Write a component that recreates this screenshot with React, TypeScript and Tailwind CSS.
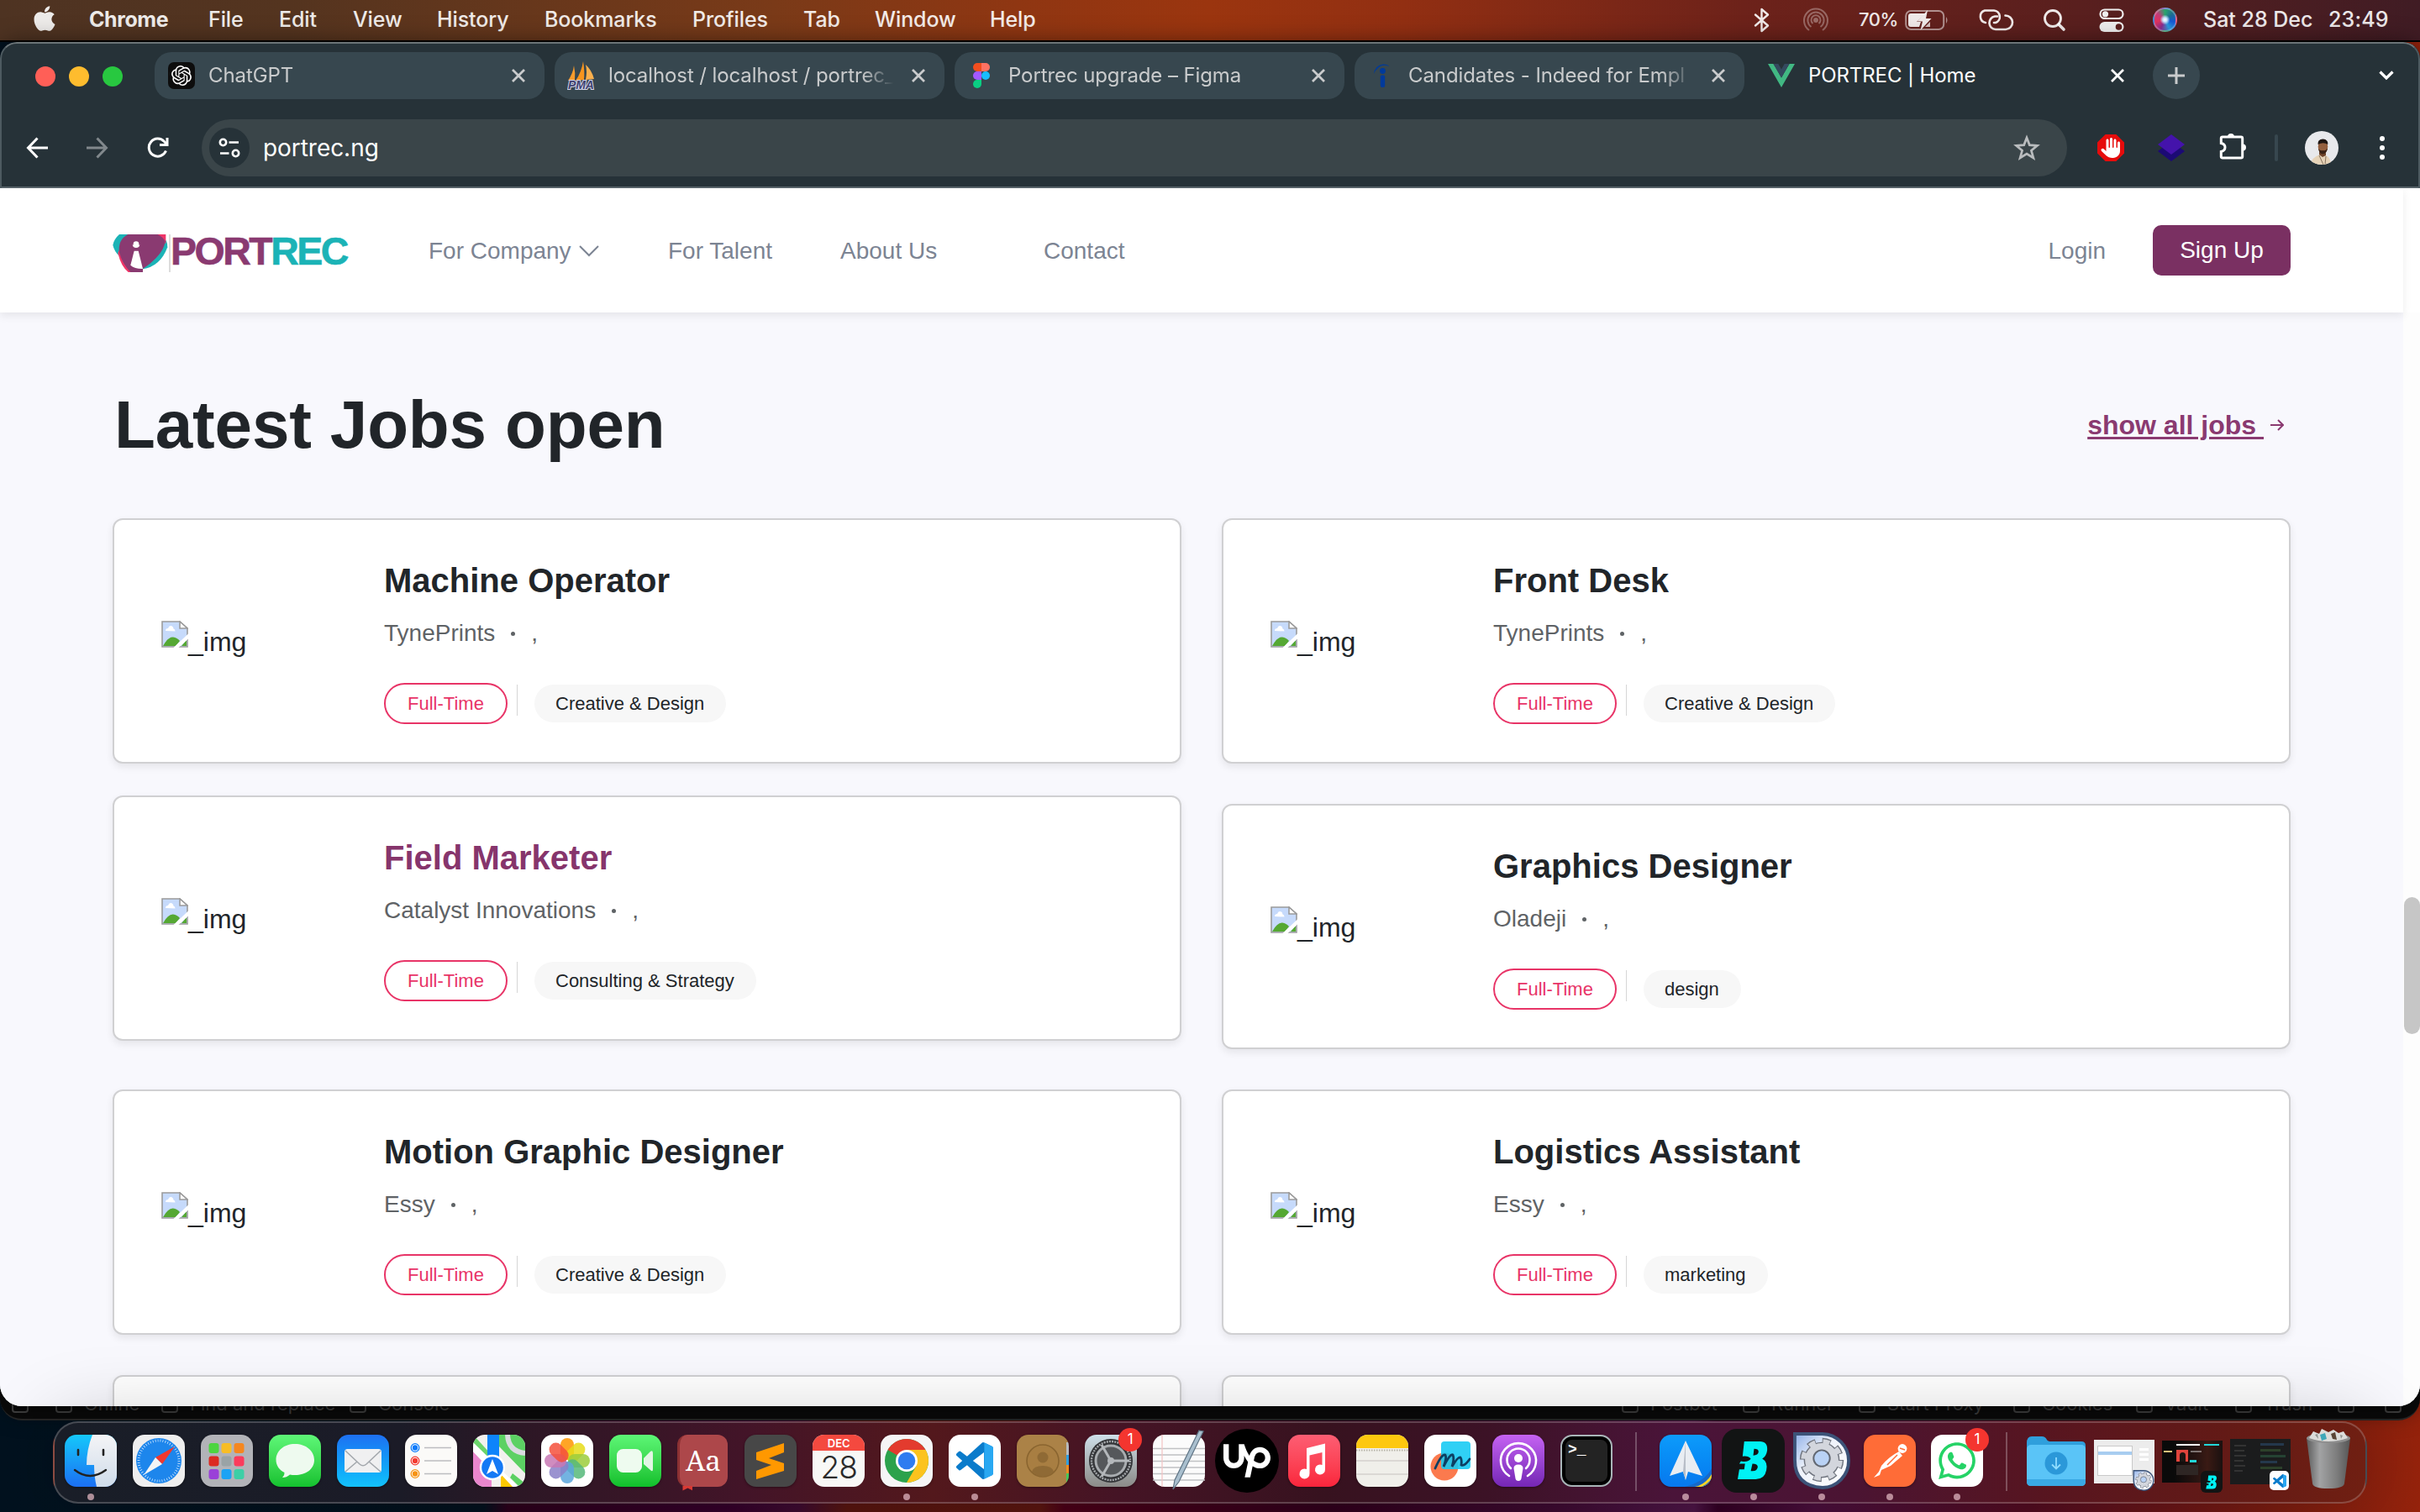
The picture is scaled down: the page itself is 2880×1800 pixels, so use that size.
import React from "react";
import { FaApple, FaWhatsapp, FaHand } from "react-icons/fa6";
import { SiOpenai, SiUpwork } from "react-icons/si";

const VSCODE =
  "M23.15 2.587L18.21.21a1.494 1.494 0 0 0-1.705.29l-9.46 8.63-4.12-3.128a.999.999 0 0 0-1.276.057L.327 7.261A1 1 0 0 0 .326 8.74L3.899 12 .326 15.26a1 1 0 0 0 .001 1.479L1.65 17.94a.999.999 0 0 0 1.276.057l4.12-3.128 9.46 8.63a1.492 1.492 0 0 0 1.704.29l4.942-2.377A1.5 1.5 0 0 0 24 20.06V3.939a1.5 1.5 0 0 0-.85-1.352zm-5.146 14.861L10.826 12l7.178-5.448v10.896z";

/* ---------- macOS menu bar ---------- */

function MenuBar() {
  return (
    <div className="flex h-[50px] shrink-0 items-center border-b-2 border-black bg-[linear-gradient(90deg,#4e3322_0%,#54341f_12%,#7a3a18_32%,#8f3612_42%,#9b350f_50%,#922f12_58%,#6d221a_72%,#591f1e_86%,#401c24_100%)] pb-px text-[25px] font-medium tracking-[-0.1px] text-white/90">
      <div className="flex w-[106px] pl-[39px]">
        <FaApple className="mb-[3px] h-[34px] w-[28px]" />
      </div>
      <div className="w-[142px] font-bold tracking-[-0.400px]">Chrome</div>
      <div className="w-[84px]">File</div>
      <div className="w-[88px]">Edit</div>
      <div className="w-[100px]">View</div>
      <div className="w-[128px]">History</div>
      <div className="w-[176px]">Bookmarks</div>
      <div className="w-[132px]">Profiles</div>
      <div className="w-[85px]">Tab</div>
      <div className="w-[137px]">Window</div>
      <div className="grow">Help</div>
      <svg className="mr-[38px] h-[30px] w-[20px]" viewBox="0 0 20 30" fill="none" stroke="currentColor" strokeWidth="2.400" strokeLinejoin="round" strokeLinecap="round">
        <path d="M2 8.500 L17 21.500 L9.500 28 V2 L17 8.500 L2 21.500" />
      </svg>
      <svg className="mr-[35px] h-[32px] w-[32px] opacity-35" viewBox="0 0 32 32" fill="none" stroke="currentColor" strokeWidth="2">
        <path d="M8 28 A14 14 0 1 1 24 28" />
        <path d="M10.500 24 A9.600 9.600 0 1 1 21.500 24" />
        <path d="M12.500 20 A5.500 5.500 0 1 1 19.500 20" />
        <circle cx="16" cy="16" r="2" fill="currentColor" />
      </svg>
      <div className="w-[55px] text-[22px] tracking-[-0.500px]">70%</div>
      <svg className="mr-[34px] h-[26px] w-[52px]" viewBox="0 0 52 26">
        <rect x="1.200" y="2" width="45" height="22" rx="6" fill="none" stroke="#fff" strokeOpacity=".5" strokeWidth="2" />
        <path d="M49 9 q3 4 0 8z" fill="#fff" fillOpacity=".5" />
        <path d="M7 5 H24 L14 15 h5 L17 21 H7 q-3 0 -3 -3 V8 q0-3 3-3z" fill="currentColor" />
        <path d="M27 1 L14.500 14.500 H21 L18.500 25 L31.500 11 H25z" fill="currentColor" />
        <path d="M30 15 V21 H24z" fill="currentColor" opacity=".8" />
      </svg>
      <svg className="mr-[34px] h-[26px] w-[44px]" viewBox="0 0 44 26" fill="none" stroke="currentColor" strokeWidth="2.600" strokeLinecap="round">
        <path d="M10 16 A7.500 7.500 0 0 1 9 1.500 H20 A7.500 7.500 0 0 1 22 16 H20" />
        <path d="M33.500 7.500 A8 8 0 0 1 34 24 H22 A7.800 7.800 0 0 1 21 8.500 H24" />
      </svg>
      <svg className="mr-[39px] h-[28px] w-[28px]" viewBox="0 0 28 28" fill="none" stroke="currentColor" strokeLinecap="round">
        <circle cx="12" cy="12" r="9.500" strokeWidth="2.800" />
        <path d="M19 19 L25 25" strokeWidth="3.600" />
      </svg>
      <svg className="mr-[34px] h-[30px] w-[30px]" viewBox="0 0 30 30">
        <rect x="1.500" y="2.500" width="27" height="10.500" rx="5.200" fill="none" stroke="#eee" strokeWidth="2.200" />
        <circle cx="7.500" cy="7.800" r="3.600" fill="#eee" />
        <rect x="0.500" y="17" width="29" height="12" rx="6" fill="#eee" />
        <circle cx="23.500" cy="23" r="3.800" fill="#5c1f1e" />
      </svg>
      <div className="mr-[31px] size-[29px] rounded-full border-2 border-white/25 bg-[radial-gradient(circle_at_50%_50%,#fff_0%,#c8e4ff_14%,transparent_34%),conic-gradient(from_0deg,#2ba36c,#1d6f8f,#1558d6,#2b9be0,#8b2c8f,#e0325e,#c23a78,#2ba36c)]" />
      <div className="w-[149px] tracking-[0px]">Sat 28 Dec</div>
      <div className="w-[109px] tracking-[0.200px]">23:49</div>
    </div>
  );
}

/* ---------- Chrome ---------- */

function CloseX({ active = false }: { active?: boolean }) {
  return (
    <svg className={active ? "size-[18px] text-white" : "size-[18px] text-[#c9cbcc]"} viewBox="0 0 18 18" stroke="currentColor" strokeWidth="2.800">
      <path d="M2 2 L16 16 M16 2 L2 16" />
    </svg>
  );
}

function Tab({ icon, title }: { icon: React.ReactNode; title: string }) {
  return (
    <div className="mr-[12px] flex h-[56px] w-[464px] items-center rounded-[20px] bg-[#37474f] pr-[22px] pl-[16px]">
      <div className="mr-[16px] flex w-[32px] justify-center">{icon}</div>
      <div className="w-[350px] whitespace-nowrap text-[#c9cbcc] [mask-image:linear-gradient(90deg,#000_86%,transparent_97%)]">{title}</div>
      <div className="grow" />
      <CloseX />
    </div>
  );
}

const ChatIcon = (
  <div className="flex size-[32px] items-center justify-center rounded-[7px] bg-[#0d0d0d]">
    <SiOpenai className="size-[24px] text-white" />
  </div>
);

const PmaIcon = (
  <svg className="h-[34px] w-[34px] shrink-0" viewBox="0 0 34 34">
    <path d="M8 5 Q10 14 9 22 L1 23 Q7 14 8 5z" fill="#f89c2c" />
    <path d="M19 0 Q21 12 20 22 L10 23 Q17 13 19 0z" fill="#f7941e" />
    <path d="M22 4 Q29 10 32 21 L22 22 Q24 12 22 4z" fill="#fbb04e" />
    <text x="1" y="33" fontFamily="Liberation Sans" fontWeight="700" fontStyle="italic" fontSize="14" fill="#3f4272" stroke="#d5d6e8" strokeWidth="2" paintOrder="stroke">PMA</text>
  </svg>
);

const FigmaIcon = (
  <svg className="h-[30px] w-[20px]" viewBox="0 0 20 30">
    <path d="M5 0 H10 V10 H5 A5 5 0 0 1 5 0z" fill="#f24e1e" />
    <path d="M10 0 H15 A5 5 0 0 1 15 10 H10z" fill="#ff7262" />
    <path d="M5 10 H10 V20 H5 A5 5 0 0 1 5 10z" fill="#a259ff" />
    <circle cx="15" cy="15" r="5" fill="#1abcfe" />
    <path d="M5 20 H10 V25 A5 5 0 1 1 5 20z" fill="#0acf83" />
  </svg>
);

const IndeedIcon = (
  <svg className="h-[28px] w-[20px]" viewBox="0 0 20 28">
    <circle cx="11.500" cy="8.500" r="3.400" fill="#003a9b" />
    <rect x="8.800" y="13.500" width="5.400" height="14.500" rx="2" fill="#003a9b" />
    <path d="M1 12 Q2 2 12 0.500 Q18 0.500 19 3 Q12 0 7 4 Q3 7 1 12z" fill="#003a9b" />
  </svg>
);

function TabStrip() {
  return (
    <div className="flex h-[78px] items-center pb-[2px] text-[24px] tracking-[-0.100px]">
      <div className="flex w-[182px] gap-[16px] pt-[2px] pl-[40px]">
        <div className="size-[24px] rounded-full bg-[#ff5f57]" />
        <div className="size-[24px] rounded-full bg-[#febc2e]" />
        <div className="size-[24px] rounded-full bg-[#28c840]" />
      </div>
      <Tab icon={ChatIcon} title="ChatGPT" />
      <Tab icon={PmaIcon} title="localhost / localhost / portrec_" />
      <Tab icon={FigmaIcon} title="Portrec upgrade – Figma" />
      <Tab icon={IndeedIcon} title="Candidates - Indeed for Empl" />
      <div className="flex w-[474px] items-center pl-[16px] text-white">
        <svg className="mr-[16px] h-[28px] w-[32px]" viewBox="0 0 32 28">
          <path d="M0 0 H6.500 L16 16.500 L25.500 0 H32 L16 28z" fill="#41b883" />
          <path d="M6.500 0 H12.300 L16 6.400 L19.700 0 H25.500 L16 16.500z" fill="#34495e" />
        </svg>
        <div className="w-[359px]">PORTREC | Home</div>
        <CloseX active />
      </div>
      <div className="flex size-[56px] items-center justify-center rounded-full bg-[#37474f]">
        <svg className="size-[20px]" viewBox="0 0 20 20" stroke="#c9cbcc" strokeWidth="3">
          <path d="M10 0 V20 M0 10 H20" />
        </svg>
      </div>
      <div className="grow" />
      <svg className="mr-[29px] h-[12px] w-[18px]" viewBox="0 0 18 12" fill="none" stroke="#fff" strokeWidth="3.200">
        <path d="M1.500 1.500 L9 9 L16.500 1.500" />
      </svg>
    </div>
  );
}

function Toolbar() {
  return (
    <div className="flex h-[94px] items-center border-b-2 border-[#566268]">
      <svg className="mr-[46px] ml-[29px] size-[26px]" viewBox="0 0 26 26" fill="none" stroke="#fff" strokeWidth="3">
        <path d="M13.500 1.500 L2.500 13 L13.500 24.500 M2.500 13 H26" />
      </svg>
      <svg className="mr-[46px] size-[26px]" viewBox="0 0 26 26" fill="none" stroke="#81888c" strokeWidth="3">
        <path d="M12.500 1.500 L23.500 13 L12.500 24.500 M23.500 13 H0" />
      </svg>
      <svg className="mr-[39px] size-[26px]" viewBox="0 0 26 26" fill="none" stroke="#fff" strokeWidth="3">
        <path d="M22.500 16.500 A10.500 10.500 0 1 1 20.500 5.500 L23.500 8.500" />
        <path d="M24 1 V9.500 H15" />
      </svg>
      <div className="flex h-[68px] w-[2220px] items-center rounded-full bg-[#3a4549] pr-[32px] pl-[9px]">
        <div className="mr-[16px] flex size-[48px] items-center justify-center rounded-full bg-[#263238]">
          <svg className="h-[24px] w-[26px]" viewBox="0 0 26 24" fill="none" stroke="#fff" strokeWidth="2.600">
            <circle cx="5.500" cy="5.500" r="3.700" />
            <path d="M12.500 5.500 H24 M2 18.500 H12.500" />
            <circle cx="20.500" cy="18.500" r="3.700" />
          </svg>
        </div>
        <div className="grow text-[28px] tracking-[-0.050px] text-white">portrec.ng</div>
        <svg className="size-[32px]" viewBox="0 0 32 32" fill="none" stroke="#b9bcbe" strokeWidth="2.700">
          <path d="M16 4 L19.300 12.600 L28.500 13.300 L21.400 19.200 L23.900 28 L16 23.200 L8.100 28 L10.600 19.200 L3.500 13.300 L12.700 12.600z" />
        </svg>
      </div>
      <div className="ml-[36px] flex size-[32px] items-center justify-center bg-[#e60c0c] [clip-path:polygon(30%_0,70%_0,100%_30%,100%_70%,70%_100%,30%_100%,0_70%,0_30%)]">
        <FaHand className="h-[24px] w-[25px] text-white" />
      </div>
      <svg className="ml-[40px] size-[32px]" viewBox="0 0 32 32">
        <path d="M0 20 L16 8 L32 20 L16 32z" fill="#1c0a75" />
        <path d="M0 12 L16 0 L32 12 L16 24z" fill="#4413ab" />
      </svg>
      <svg className="mb-[4px] ml-[40px] h-[34px] w-[34px]" viewBox="0 0 34 34">
        <path d="M11 6 a4 4 0 0 1 8 0z M29 14.500 a4 4 0 0 1 0 8z" fill="#fff" />
        <path d="M5 6 H27 Q28.700 6 28.700 7.700 V29.500 Q28.700 31 27 31 H5 Q3.300 31 3.300 29.500 V23.500 Q8 22.500 8 18.300 Q8 14.500 3.300 13.500 V7.700 Q3.300 6 5 6z" fill="none" stroke="#fff" strokeWidth="3" />
      </svg>
      <div className="ml-[33px] h-[32px] w-[4px] rounded-full bg-[#37474f]" />
      <svg className="ml-[32px] size-[40px]" viewBox="0 0 40 40">
        <defs>
          <clipPath id="face"><circle cx="20" cy="20" r="20" /></clipPath>
        </defs>
        <g clipPath="url(#face)">
          <rect width="40" height="40" fill="#e8e9ec" />
          <path d="M7 40 Q8 31 18 28 L25 29 Q31 32 31 40z" fill="#e6d3b8" />
          <path d="M17 22 H25 V29 L21 31 L17 28z" fill="#6e4329" />
          <ellipse cx="21.500" cy="18.500" rx="5.800" ry="8" fill="#94603f" />
          <path d="M15.500 16 Q15 9.500 21.500 9.500 Q28 10 27.300 16 Q22 12.500 15.500 16z" fill="#1d1512" />
          <path d="M16 21 Q17.500 27.500 21.500 27.300 Q26 27 27 20.500 Q24.500 24 21.500 23 Q18.500 24 16 21z" fill="#3a2316" />
          <path d="M17 29 L22 40 M25 30 L24 40" stroke="#705b46" strokeWidth=".8" />
        </g>
      </svg>
      <div className="ml-[49px] flex flex-col gap-[5px]">
        <div className="size-[6px] rounded-full bg-white" />
        <div className="size-[6px] rounded-full bg-white" />
        <div className="size-[6px] rounded-full bg-white" />
      </div>
    </div>
  );
}

/* ---------- Portrec page ---------- */

function Logo() {
  return (
    <div className="flex h-[45px] w-[376px] items-start">
      <svg className="h-[45px] w-[66px]" viewBox="42 57 198 135">
        <path d="M43 95 Q46 75 66 57 H215 Q240 80 238 103 Q212 172 150 181 L110 178 L67 136 Q47 116 43 95z" fill="#1bb3b6" />
        <path d="M61 124 Q72 172 98 192 H120 L66 112z M200 57 H232 V90 L205 74z" fill="#ef3568" />
        <path d="M66 122 Q60 76 97 57 H203 Q221 66 230 82 Q226 112 197 142 Q174 166 150 180 V192 H106 Q76 160 66 122z" fill="#8a3a71" />
        <path d="M150 180 Q122 181 106 167 L119 116 H134z" fill="#fff" />
        <circle cx="126" cy="92" r="10" fill="#fff" />
        <path d="M113 94 Q126 100 139 94 Q138 105 126 105 Q114 105 113 94z" fill="#fff" />
      </svg>
      <div className="ml-[1px] h-[45px] w-[2px] bg-[#dcdcdc]" />
      <div className="text-[46.500px] leading-[40px] font-bold tracking-[-2.500px] text-[#8a3a71] [-webkit-text-stroke:0.6px_currentColor]">
        PORT<span className="text-[#1bb3b6]">REC</span>
      </div>
    </div>
  );
}

function SiteHeader() {
  return (
    <div className="relative z-10 flex h-[148px] w-[2860px] items-center bg-white pl-[134px] text-[28px] text-[#7c8493] shadow-[0_4px_10px_rgba(0,0,0,0.08)]">
      <div className="pt-[6px]"><Logo /></div>
      <div className="mt-[2px] flex w-[285px] items-center">
        For Company
        <svg className="ml-[9px] h-[14px] w-[24px]" viewBox="0 0 24 14" fill="none" stroke="currentColor" strokeWidth="2">
          <path d="M1 1 L12 12 L23 1" />
        </svg>
      </div>
      <div className="mt-[2px] w-[205px]">For Talent</div>
      <div className="mt-[2px] w-[242px]">About Us</div>
      <div className="mt-[2px] grow">Contact</div>
      <div className="mt-[2px] mr-[56px]">Login</div>
      <div className="mr-[134px] flex h-[60px] w-[164px] items-center justify-center rounded-[10px] bg-[#7a3062] text-white">Sign Up</div>
    </div>
  );
}

function BrokenImage() {
  return (
    <svg className="mb-[19px] size-[32px]" viewBox="0 0 32 32">
      <path d="M1 1 H22 L31 9 V31 H1z" fill="#c6dafb" stroke="#9b9b9b" strokeWidth="1.600" />
      <path d="M22 1 V9 H31z" fill="#fff" stroke="#9b9b9b" strokeWidth="1.600" />
      <path d="M5 12 q0-3 3-3 q1-3 3-3 q3 0 3.500 3.500 q2 .5 2 3z" fill="#fff" />
      <path d="M2 30 Q8 19 14 19.500 Q19 20 22 24 L17 30z M24 30 L30 23 V30z" fill="#55a833" />
      <path d="M14.500 32 L32 15.500 V21.500 L20.500 32z" fill="#fff" />
    </svg>
  );
}

type Job = { title: string; company: string; tag: string; hovered?: boolean };

const JOBS: Job[] = [
  { title: "Machine Operator", company: "TynePrints", tag: "Creative & Design" },
  { title: "Front Desk", company: "TynePrints", tag: "Creative & Design" },
  { title: "Field Marketer", company: "Catalyst Innovations", tag: "Consulting & Strategy", hovered: true },
  { title: "Graphics Designer", company: "Oladeji", tag: "design" },
  { title: "Motion Graphic Designer", company: "Essy", tag: "Creative & Design" },
  { title: "Logistics Assistant", company: "Essy", tag: "marketing" },
];

const CARD =
  "flex h-[292px] rounded-[12px] border-2 border-[#d0d0d2] bg-white pl-[56px] shadow-[0_4px_10px_rgba(0,0,0,0.08)]";

function JobCard({ job }: { job: Job }) {
  return (
    <div className={job.hovered ? CARD + " -translate-y-[10px]" : CARD}>
      <div className="flex h-full w-[265px] items-center pt-[2px]">
        <BrokenImage />
        <span className="text-[32px] leading-[40px] text-[#212529]">_img</span>
      </div>
      <div className="flex flex-col pt-[48px]">
        <div className={job.hovered ? "text-[40px] leading-[48px] font-bold text-[#86356c]" : "text-[40px] leading-[48px] font-bold text-[#212529]"}>
          {job.title}
        </div>
        <div className="mt-[19px] flex items-center text-[28px] leading-[40px] text-[#5f6366]">
          {job.company}
          <span className="mr-[19px] ml-[19px] size-[5px] rounded-full bg-[#5f6366]" />,
        </div>
        <div className="mt-[39px] flex items-start text-[22px]">
          <div className="flex h-[49px] w-[147px] items-center justify-center rounded-full border-2 border-[#e83467] text-[#e83467]">Full-Time</div>
          <div className="mt-[2px] ml-[11px] h-[37px] w-[1px] bg-[#d6d6d6]" />
          <div className="mt-[2px] ml-[20px] flex h-[45px] items-center rounded-full bg-[#f7f7f7] pr-[26px] pl-[25px] text-[#212529]">{job.tag}</div>
        </div>
      </div>
    </div>
  );
}

function Page() {
  return (
    <div className="flex grow flex-col overflow-hidden bg-white font-['Liberation_Sans',Arial,sans-serif]">
      <SiteHeader />
      <div className="flex h-[1302px]">
        <div className="w-[2860px] overflow-hidden bg-[#f8f8fd] pr-[134px] pl-[134px]">
          <div className="flex items-center justify-between pt-[86px]">
            <div className="pl-[2px] text-[80px] leading-[96px] font-bold tracking-[-0.150px] text-[#212529]">Latest Jobs open</div>
            <div className="flex items-center pr-[8px] text-[32px] font-bold text-[#8a3a71]">
              <span className="whitespace-pre underline decoration-[3px] underline-offset-[3px]">show all jobs </span>
              <svg className="ml-[8px] size-[16px]" viewBox="0 0 16 16" fill="none" stroke="currentColor" strokeWidth="2">
                <path d="M0 8 H15 M9 2 L15 8 L9 14" />
              </svg>
            </div>
          </div>
          <div className="mt-[63px] grid grid-cols-2 gap-12">
            {JOBS.map((job) => (
              <JobCard key={job.title} job={job} />
            ))}
            <div className={CARD} />
            <div className={CARD} />
          </div>
        </div>
        <div className="w-[20px] bg-[#fdfdfd] pt-[696px] pl-[1px]">
          <div className="h-[163px] w-[19px] rounded-full bg-[#c6c6c6]" />
        </div>
      </div>
    </div>
  );
}

function BrowserWindow() {
  return (
    <div className="relative z-10 flex h-[1624px] shrink-0 flex-col overflow-hidden rounded-t-[20px] rounded-b-[26px] bg-[#263238] font-[Inter,sans-serif] shadow-[0_4px_30px_rgba(0,0,0,0.6)]">
      <div className="flex h-[174px] shrink-0 flex-col rounded-t-[20px] border-x-2 border-t-2 border-[#6b7477] border-x-[#4d5a60]">
        <TabStrip />
        <Toolbar />
      </div>
      <Page />
    </div>
  );
}

/* ---------- Window peeking out under the browser ---------- */

function Glyph() {
  return <div className="mr-[14px] size-[20px] rounded-[4px] border-2 border-[#4a4a4a]" />;
}

function StatusBar() {
  return (
    <div className="-mt-[26px] flex h-[43px] shrink-0 items-center rounded-b-[26px] border-b-2 border-[#2b2b2b] bg-[#0c0c0c] pt-[6px] text-[22px] text-[#4a4a4a]">
      <div className="flex w-[66px] items-center pl-[14px]"><Glyph /></div>
      <div className="flex w-[126px] items-center"><Glyph />Online</div>
      <div className="flex w-[224px] items-center"><Glyph />Find and replace</div>
      <div className="flex grow items-center"><Glyph />Console</div>
      <div className="flex w-[144px] items-center"><Glyph />Postbot</div>
      <div className="flex w-[138px] items-center"><Glyph />Runner</div>
      <div className="flex w-[184px] items-center"><Glyph />Start Proxy</div>
      <div className="flex w-[146px] items-center"><Glyph />Cookies</div>
      <div className="flex w-[118px] items-center"><Glyph />Vault</div>
      <div className="flex w-[122px] items-center"><Glyph />Trash</div>
      <div className="flex w-[56px] items-center"><Glyph /></div>
      <div className="flex w-[42px] items-center"><Glyph /></div>
    </div>
  );
}

/* ---------- Dock ---------- */

function Cell({ children, dot = false, badge = false }: { children: React.ReactNode; dot?: boolean; badge?: boolean }) {
  return (
    <div className="relative flex h-full w-[80.900px] shrink-0 items-center justify-center pb-[5px]">
      {children}
      {badge && (
        <div className="absolute top-[6px] right-[3px] flex size-[28px] items-center justify-center rounded-full bg-[#f4352f] text-[17px] text-white">1</div>
      )}
      {dot && <div className="absolute bottom-[2px] size-[8px] rounded-full bg-[#dfb4bf]/75" />}
    </div>
  );
}

function Tile({ children, className = "" }: { children?: React.ReactNode; className?: string }) {
  return (
    <svg className={"h-[62px] w-[62px] rounded-[14px] shadow-[0_1px_3px_rgba(0,0,0,0.4)] " + className} viewBox="0 0 62 62">
      {children}
    </svg>
  );
}

const PETALS = ["#ff9500", "#e6dc1a", "#9ccc3c", "#56b97a", "#5aa6dc", "#8a80c8", "#c878b4", "#f4503c"];
const PADS = ["#4cd540", "#f8bd26", "#f5871f", "#dc2a22", "#9aa3a6", "#fb3b5c", "#9a41d8", "#1ca3f4", "#3ccfa6"];

function VsCode({ className }: { className: string }) {
  return (
    <svg className={className} viewBox="0 0 24 24">
      <path d={VSCODE} fill="#0a7bcb" />
      <path d="M18.200 0.200 L23.200 2.600 Q24 3 24 4 V20 Q24 21 23.200 21.400 L18.200 23.800z" fill="#29a8f2" />
    </svg>
  );
}

function BMark({ className }: { className: string }) {
  return (
    <svg className={className} viewBox="0 0 40 48">
      <path d="M9 1 H28 Q38 1 37 12 Q36 19 31 22 Q38 26 36 36 Q34 47 23 47 H1 L3 35 H9 L10 28 H3 L5 25 Q14 27 17 22 Q14 18 7 19z M21 10 L20 18 Q26 18 26.500 13.500 Q26.500 10 21 10z M19 28 L17 37 Q25 38 25.500 32 Q25.500 28 19 28z" fill="#00f2f5" fillRule="evenodd" />
    </svg>
  );
}

function Gear({ className }: { className: string }) {
  return (
    <svg className={className} viewBox="0 0 70 70">
      <defs>
        <linearGradient id="gearbg" x1="0" y1="0" x2="1" y2="1">
          <stop offset="0" stopColor="#8fb0e8" /><stop offset=".4" stopColor="#eef2fa" /><stop offset="1" stopColor="#fff" />
        </linearGradient>
      </defs>
      <path d="M2 2 H36 A33 33 0 0 1 68 35 A33 33 0 0 1 36 68 Q2 66 2 34z" fill="url(#gearbg)" stroke="#3c5378" strokeWidth="4" />
      <circle cx="35" cy="34" r="22" fill="none" stroke="#70757f" strokeWidth="10" strokeDasharray="9.500 7.780" />
      <circle cx="35" cy="34" r="18" fill="none" stroke="#70757f" strokeWidth="8" />
      <circle cx="35" cy="34" r="21" fill="none" stroke="#d3d6dd" strokeWidth="9" strokeDasharray="7.500 8.990" strokeDashoffset="-.9" />
      <circle cx="35" cy="34" r="15" fill="none" stroke="#d3d6dd" strokeWidth="11" />
      <circle cx="35" cy="32" r="10" fill="#b9d2f5" stroke="#626872" strokeWidth="2" />
    </svg>
  );
}

function Separator() {
  return (
    <div className="flex h-full w-[37px] shrink-0 items-center justify-center pb-[3px]">
      <div className="h-[70px] w-[2px] bg-white/25" />
    </div>
  );
}

function Dock() {
  return (
    <div className="relative z-20 mx-[63px] mt-[1px] flex h-[98px] shrink-0 rounded-[30px] border-2 border-white/20 bg-[linear-gradient(90deg,#191e28_0%,#1b1b27_15%,#2c1725_20%,#431428_30%,#53181c_38%,#451425_46%,#37121f_55%,#3c1226_62%,#4a1439_70%,#4b1432_78%,#571520_86%,#631a16_94%,#701f12_100%)] pl-[3px] font-[Inter,sans-serif] shadow-[0_0_90px_rgba(0,0,0,0.22)]">
      <Cell dot>
        <Tile>
          <defs>
            <linearGradient id="fl" x1="0" y1="0" x2="0" y2="1"><stop offset="0" stopColor="#15c8fb" /><stop offset="1" stopColor="#1b6ff2" /></linearGradient>
            <linearGradient id="fr" x1="0" y1="0" x2="0" y2="1"><stop offset="0" stopColor="#f4f4f6" /><stop offset="1" stopColor="#cfdcea" /></linearGradient>
          </defs>
          <rect width="62" height="62" fill="url(#fl)" />
          <path d="M33 0 Q26 18 26 36 H35 Q35 50 38 62 H62 V0z" fill="url(#fr)" />
          <path d="M16 18 V24 M46 18 V24" stroke="#222" strokeWidth="2.600" strokeLinecap="round" />
          <path d="M12 42 Q30 56 49 42" fill="none" stroke="#222" strokeWidth="2.400" strokeLinecap="round" />
        </Tile>
      </Cell>
      <Cell>
        <Tile className="bg-[#eeeeee]">
          <circle cx="31" cy="31" r="27" fill="#1d86ec" />
          <circle cx="31" cy="31" r="24" fill="none" stroke="#cfe6ff" strokeWidth="3" strokeDasharray=".8 2.200" />
          <path d="M50 14 L27 27 L35 35z" fill="#f0372f" />
          <path d="M13 48 L27 27 L35 35z" fill="#f5f5f5" />
        </Tile>
      </Cell>
      <Cell>
        <Tile className="bg-[#b2b3b8]">
          {PADS.map((c, i) => (
            <rect key={c} x={9.500 + (i % 3) * 15} y={10 + Math.floor(i / 3) * 15.500} width="12" height="12" rx="3" fill={c} />
          ))}
        </Tile>
      </Cell>
      <Cell>
        <Tile className="bg-gradient-to-b from-[#5df777] to-[#12c22e]">
          <path d="M31 11 C44 11 54 19 54 30 C54 41 44 48 31 48 Q28 48 25 47.500 Q21 51 16 51 Q19 48 18.500 45 C12 42 8.500 36 8.500 30 C8.500 19 18 11 31 11z" fill="#eefaef" />
        </Tile>
      </Cell>
      <Cell>
        <Tile className="bg-gradient-to-b from-[#1e70f2] to-[#14c2fb]">
          <rect x="9" y="17" width="44" height="28" rx="3.500" fill="#f0f0f1" />
          <path d="M10 19 L27 35 Q31 38.500 35 35 L52 19 M10 44 L24 32 M52 44 L38 32" fill="none" stroke="#a4a8ad" strokeWidth="1.600" />
        </Tile>
      </Cell>
      <Cell>
        <Tile className="bg-[#fbfaf8]">
          {["#0a7bfb", "#f33b30", "#f69313"].map((c, i) => (
            <g key={c}>
              <circle cx="12" cy={15.500 + i * 15.500} r="4.800" fill="#fff" stroke={c} strokeWidth="1.300" />
              <circle cx="12" cy={15.500 + i * 15.500} r="3.200" fill={c} />
              <path d={`M23 ${15.500 + i * 15.500} H55`} stroke="#bcbdc0" strokeWidth="1.300" />
            </g>
          ))}
        </Tile>
      </Cell>
      <Cell>
        <Tile className="bg-[#f2f1ee]">
          <path d="M31 0 H62 V46 L31 14z" fill="#5cd163" />
          <path d="M0 20 L22 44 V62 H0z" fill="#ea86cd" />
          <path d="M0 0 L22 24 V34 L0 12z" fill="#6bd56b" />
          <path d="M0 9 L54 62 H42 L0 20z" fill="#fff" />
          <path d="M33 62 V47 L47 62z" fill="#fdc800" />
          <path d="M17 0 H31 V32 H17z" fill="#0d84fb" />
          <path d="M41 0 Q42 20 62 22" fill="none" stroke="#dadbe0" strokeWidth="6" />
          <path d="M47 46 L62 58 V62 H55 L44 51z" fill="#5cd163" />
          <circle cx="23" cy="39" r="14" fill="#1479f5" stroke="#fff" strokeWidth="2.400" />
          <path d="M23 29 L30 47 L23 43 L16 47z" fill="#fff" />
        </Tile>
      </Cell>
      <Cell>
        <Tile className="bg-white">
          {PETALS.map((c, i) => (
            <rect key={c} x="23" y="4" width="16" height="26" rx="8" fill={c} opacity=".85" transform={`rotate(${i * 45} 31 31)`} />
          ))}
        </Tile>
      </Cell>
      <Cell>
        <Tile className="bg-gradient-to-b from-[#5cf675] to-[#0dc02a]">
          <rect x="9" y="17" width="30" height="28" rx="7.500" fill="#eefbef" />
          <path d="M41 28 L49 20 Q52 18 52 22 V41 Q52 45 49 42 L41 35z" fill="#e2f6e4" />
        </Tile>
      </Cell>
      <Cell>
        <div className="relative flex h-[62px] w-[60px] items-center justify-center rounded-[12px] border-l-3 border-[#8c3133] bg-[#ad474a] pr-[2px] font-['Noto_Serif','Liberation_Serif',serif] text-[33px] text-white">
          Aa
          <div className="absolute top-[61px] left-[3px] h-[6px] w-[12px] bg-[#d93a34] [clip-path:polygon(0_0,100%_0,100%_100%,50%_50%,0_100%)]" />
        </div>
      </Cell>
      <Cell>
        <Tile className="bg-[#474747]">
          <path d="M47 10 V21 L29 28 L47 34 V43 L14 53 V43 L32 36 L14 30 V21z" fill="#ff9800" />
        </Tile>
      </Cell>
      <Cell>
        <div className="flex h-[62px] w-[62px] flex-col overflow-hidden rounded-[14px] bg-[#f8f8f6] text-center text-[#2b2b2b]">
          <div className="h-[19px] bg-[#f4493f] text-[13px] leading-[20px] font-semibold text-white">DEC</div>
          <div className="text-[37px] leading-[40px] font-light tracking-[-1px]">28</div>
        </div>
      </Cell>
      <Cell dot>
        <Tile className="bg-[#f5f5f6]">
          <circle cx="31" cy="31" r="26" fill="#2ba24c" />
          <path d="M31 31 L8.500 18 A26 26 0 0 1 53.500 18z" fill="#e33b2e" />
          <path d="M31 18 H53.500 A26 26 0 0 1 31 57 L42.300 37.500z" fill="#fcc31e" />
          <circle cx="31" cy="31" r="13" fill="#fff" />
          <circle cx="31" cy="31" r="10.300" fill="#2f7cf0" />
        </Tile>
      </Cell>
      <Cell dot>
        <div className="flex size-[62px] items-center justify-center rounded-[14px] bg-white">
          <VsCode className="size-[44px]" />
        </div>
      </Cell>
      <Cell>
        <Tile className="bg-[#ab8247]">
          <rect x="59" y="9" width="3" height="16" fill="#b8bcc0" />
          <rect x="59" y="24" width="3" height="12" fill="#2f9fe0" />
          <rect x="59" y="36" width="3" height="10" fill="#f08c1e" />
          <rect x="59" y="46" width="3" height="16" fill="#45c85a" />
          <circle cx="31" cy="31" r="19" fill="#a87e42" stroke="#8a6530" strokeWidth="1.600" />
          <circle cx="31" cy="27" r="6.500" fill="#8f6a35" />
          <path d="M18 44 Q20 37 31 37 Q42 37 44 44 Q31 55 18 44z" fill="#8f6a35" />
        </Tile>
      </Cell>
      <Cell badge>
        <Tile className="bg-gradient-to-b from-[#cfe0ea] to-[#8b8b88]">
          <circle cx="31" cy="31" r="26" fill="#333538" />
          <circle cx="31" cy="31" r="23" fill="none" stroke="#a4a8ab" strokeWidth="2.400" strokeDasharray="2 1.200" />
          <circle cx="31" cy="31" r="18" fill="#55585b" stroke="#a9adb0" strokeWidth="3" />
          <path d="M31 31 H53 M31 31 L20 12 M31 31 L20 50" stroke="#b4b8bb" strokeWidth="3" />
          <circle cx="31" cy="31" r="4" fill="#b4b8bb" />
        </Tile>
      </Cell>
      <Cell>
        <svg className="h-[74px] w-[66px]" viewBox="0 0 66 74">
          <rect x="2" y="6" width="62" height="62" rx="14" fill="#fbfbfb" />
          <path d="M2 22.500 H64 M2 30 H64 M2 37.500 H64 M2 45 H64 M2 52.500 H64 M2 60 H64" stroke="#c0c1c4" strokeWidth="1.400" />
          <path d="M13 6 V68" stroke="#f3c3c3" strokeWidth="1.200" />
          <path d="M57 1 L62 2 L33 62 L26 71 L28 60z" fill="#a9bfce" stroke="#5f7485" strokeWidth="1.200" />
        </svg>
      </Cell>
      <Cell>
        <div className="flex size-[76px] shrink-0 items-center justify-center rounded-full bg-black">
          <SiUpwork className="size-[56px] text-white" />
        </div>
      </Cell>
      <Cell>
        <Tile className="bg-gradient-to-b from-[#fd5d73] to-[#fa233b]">
          <path d="M22 16 L44 10.500 V41 A6 6 0 1 1 40.500 36 V21 L25.500 24.500 V46 A6 6 0 1 1 22 41z" fill="#fff" />
        </Tile>
      </Cell>
      <Cell>
        <Tile className="bg-[#f0efea]">
          <rect width="62" height="16" fill="#fdc80f" />
          <path d="M0 18.500 H62" stroke="#b5b2a8" strokeWidth="2" strokeDasharray="1.500 1.500" />
          <path d="M0 31 H62 M0 47 H62" stroke="#d3d1cd" strokeWidth="1.600" />
        </Tile>
      </Cell>
      <Cell>
        <Tile className="bg-white">
          <circle cx="24" cy="38" r="16.500" fill="#fb7a4e" />
          <rect x="20" y="8" width="35" height="33" rx="4" fill="#13c9f4" opacity=".88" />
          <path d="M13 40 Q21 22 25 24 Q27 27 23 38 Q31 22 34 24 Q36 28 33 38 Q40 26 43 27 Q45 30 44 36 Q48 38 54 29" fill="none" stroke="#0d3f63" strokeWidth="2.800" strokeLinecap="round" />
        </Tile>
      </Cell>
      <Cell>
        <Tile className="bg-gradient-to-b from-[#c562f2] to-[#7526b5]">
          <g fill="none" stroke="#fff" strokeWidth="2.600" strokeLinecap="round">
            <path d="M20 49 A21 21 0 1 1 42 49" />
            <path d="M22 40 A13.500 13.500 0 1 1 40 40" />
          </g>
          <circle cx="31" cy="28" r="5" fill="#fff" />
          <path d="M25.500 40 Q25.500 35.500 31 35.500 Q36.500 35.500 36.500 40 L34.500 52 Q34 55 31 55 Q28 55 27.500 52z" fill="#fff" />
        </Tile>
      </Cell>
      <Cell>
        <div className="flex size-[62px] items-start rounded-[14px] border-2 border-[#a9b5b8] bg-[#232323] pt-[6px] pl-[7px] font-['Liberation_Mono',monospace] text-[18px] leading-[20px] font-bold text-white ring-4 ring-black ring-inset">&gt;_</div>
      </Cell>
      <Separator />
      <Cell dot>
        <Tile className="bg-gradient-to-b from-[#0d9bfb] to-[#0878ee]">
          <path d="M34 62 Q54 58 62 42 V62z" fill="#fdd423" />
          <path d="M30 62 Q54 56 62 40 V47 Q54 60 42 62z M50 62 Q58 58 62 52 V56 L57 62z" fill="#1769c9" />
          <path d="M31 7 L51 49 L34 44 L31 54 L28 44 L12 49z" fill="#e9edf2" />
          <path d="M31 7 V54 L28 44z" fill="#b8bec8" />
        </Tile>
      </Cell>
      <Cell dot>
        <div className="flex h-[76px] w-[75px] shrink-0 items-center justify-center rounded-[18px] bg-[#121414]">
          <BMark className="h-[47px] w-[39px]" />
        </div>
      </Cell>
      <Cell dot><Gear className="h-[68px] w-[70px] shrink-0" /></Cell>
      <Cell dot>
        <Tile className="bg-[#ff6c37]">
          <circle cx="46" cy="16.500" r="5.400" fill="#fff" />
          <path d="M42 20 L46 25 Q40 30 32 37 L21 42 L19 48 L12 51 L18 44 L21 37 Q30 26 42 20z" fill="#fff" />
          <path d="M40 24 L28 36 M43 16 L49 18" stroke="#ff6c37" strokeWidth="1.500" />
        </Tile>
      </Cell>
      <Cell dot badge>
        <div className="flex size-[62px] items-center justify-center rounded-[14px] bg-white">
          <FaWhatsapp className="size-[50px] text-[#25d366]" />
        </div>
      </Cell>
      <Separator />
      <Cell>
        <svg className="h-[62px] w-[70px]" viewBox="0 0 70 62">
          <path d="M0 10 Q0 2 6 2 H18 Q22 2 24 6 Q25 8 29 8 H65 Q70 8 70 13 V30 H0z" fill="#2f9fdc" />
          <rect y="12" width="70" height="49" rx="5" fill="#5ac4f7" />
          <path d="M0 53 H70 V56 Q70 61 65 61 H5 Q0 61 0 56z" fill="#3aa9e4" />
          <circle cx="35" cy="34" r="13.500" fill="#2b98d9" />
          <path d="M35 27 V40 M30 35.500 L35 40.500 L40 35.500" fill="none" stroke="#8fdcff" strokeWidth="1.800" />
        </svg>
      </Cell>
      <Cell>
        <div className="relative mt-[3px] h-[52px] w-[72px] shrink-0 bg-[#ececec] pt-[7px] pl-[4px]">
          <div className="h-[36px] w-[42px] border border-[#c9c9c9] bg-white pt-[6px]">
            <div className="h-[4px] bg-[#a8cdf0]" />
          </div>
          <div className="absolute top-[36px] right-0"><Gear className="h-[25px] w-[26px]" /></div>
          <div className="absolute top-[10px] right-[7px] flex flex-col gap-[3px]">
            <div className="h-[3px] w-[11px] bg-white" /><div className="h-[3px] w-[11px] bg-white" /><div className="h-[3px] w-[11px] bg-white" />
          </div>
        </div>
      </Cell>
      <Cell>
        <div className="relative mt-[3px] h-[50px] w-[72px] shrink-0 bg-[linear-gradient(90deg,#0a0a0a_20%,#2a1512_60%,#3a1a14_75%,#1a1110_100%)]">
          <div className="absolute top-[4px] left-[17px] h-[2px] w-[28px] bg-white" />
          <div className="absolute top-[4px] left-[50px] h-[2px] w-[18px] bg-[#22d6d8]" />
          <div className="absolute top-[12px] left-[2px] h-[2px] w-[10px] bg-[#e6c27a]" />
          <div className="absolute top-[11px] left-[17px] h-[14px] w-[14px] bg-[#e0443c]">
            <div className="mx-auto mt-[3px] h-[11px] w-[7px] rounded-t-full bg-[#1b1512]" />
          </div>
          <div className="absolute top-[12px] left-[34px] h-[2px] w-[13px] bg-white/40" />
          <div className="absolute top-[23px] left-[33px] h-[3px] w-[8px] bg-[#22d6d8]" />
          <div className="absolute top-[29px] left-[17px] h-[12px] w-[26px] bg-[#2e2624]" />
          <div className="absolute top-[36px] right-0 flex size-[26px] items-center justify-center rounded-[6px] bg-[#121414]">
            <BMark className="h-[17px] w-[14px]" />
          </div>
        </div>
      </Cell>
      <Cell>
        <div className="relative mt-[3px] h-[54px] w-[72px] shrink-0 bg-[#1b1c1d]">
          <div className="absolute top-[5px] left-[36px] flex flex-col gap-[4px]">
            <div className="h-[3px] w-[28px] bg-[#24384c]" /><div className="h-[3px] w-[24px] bg-[#2c402a]" /><div className="h-[3px] w-[30px] bg-[#254233]" />
            <div className="h-[3px] w-[20px] bg-[#24384c]" /><div className="h-[3px] w-[26px] bg-[#2c402a]" />
          </div>
          <div className="absolute top-[7px] left-[5px] flex flex-col gap-[4px]">
            <div className="h-[2px] w-[14px] bg-[#333]" /><div className="h-[2px] w-[12px] bg-[#333]" /><div className="h-[2px] w-[14px] bg-[#333]" />
            <div className="h-[2px] w-[11px] bg-[#333]" /><div className="h-[2px] w-[13px] bg-[#333]" /><div className="h-[2px] w-[10px] bg-[#333]" />
          </div>
          <div className="absolute top-[38px] right-[2px] flex size-[23px] items-center justify-center rounded-[5px] bg-white">
            <VsCode className="size-[16px]" />
          </div>
        </div>
      </Cell>
      <Cell>
        <svg className="mb-[4px] h-[74px] w-[56px]" viewBox="0 0 56 74">
          <defs>
            <linearGradient id="can" x1="0" y1="0" x2="1" y2="0">
              <stop offset="0" stopColor="#5b5b5b" /><stop offset=".3" stopColor="#a2a3a4" /><stop offset=".7" stopColor="#7c7c7c" /><stop offset="1" stopColor="#555" />
            </linearGradient>
          </defs>
          <path d="M2 12 L9 66 Q10 72 28 72 Q46 72 47 66 L54 12z" fill="url(#can)" />
          <ellipse cx="28" cy="12" rx="26" ry="6" fill="#8e8e8e" />
          <path d="M5 12 L10 4 L17 7 L20 1 L28 5 L34 2 L40 6 L46 4 L51 12 Q28 20 5 12z" fill="#dcdcda" />
          <path d="M18 8 L24 6 L26 13 L20 15z" fill="#3fa7b9" />
          <path d="M31 7 L36 5 L38 14 L33 13z" fill="#5a4536" />
          <path d="M12 8 L15 7 L16 13z M42 8 L45 9 L43 13z" fill="#8f938f" />
        </svg>
      </Cell>
    </div>
  );
}

export default function App() {
  return (
    <div className="flex h-[1800px] w-[2880px] flex-col overflow-hidden bg-[linear-gradient(90deg,#02121f_0%,#03111d_20%,#2c001b_21%,#34002a_30%,#3d0b30_33%,#57150f_35%,#5a1610_43%,#4a0018_44%,#30001c_55%,#3c0a30_64%,#4d1546_70%,#330024_71%,#4a0f3c_75%,#520c20_84%,#7a1c10_94%,#96230c_100%)] font-[Inter,sans-serif]">
      <MenuBar />
      <BrowserWindow />
      <StatusBar />
      <Dock />
    </div>
  );
}
